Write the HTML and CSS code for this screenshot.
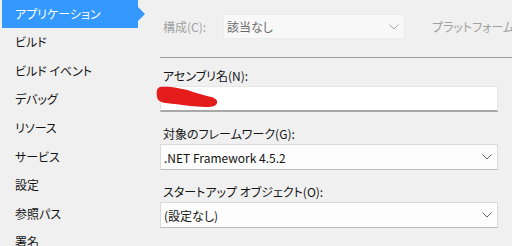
FILE: index.html
```html
<!DOCTYPE html>
<html lang="ja">
<head>
<meta charset="utf-8">
<link rel="stylesheet" href="styles.css">
</head>
<body>
<div class="page">
  <nav class="sidebar">
    <div class="item selected">アプリケーション</div>
    <div class="item">ビルド</div>
    <div class="item">ビルド イベント</div>
    <div class="item">デバッグ</div>
    <div class="item">リソース</div>
    <div class="item">サービス</div>
    <div class="item">設定</div>
    <div class="item">参照パス</div>
    <div class="item">署名</div>
  </nav>
  <main class="main">
    <div class="toprow">
      <span class="toplabel disabled">構成(C):</span>
      <div class="combo combo-top">
        <span class="value-dim">該当なし</span>
        <svg class="chev" width="10" height="6" viewBox="0 0 10 6"><polyline points="0.5,0.5 5,5 9.5,0.5" fill="none" stroke="#a8a8a8" stroke-width="1"/></svg>
      </div>
      <span class="platform disabled">プラットフォーム(</span>
    </div>
    <div class="sep"></div>
    <div class="form">
      <div class="field">
        <div class="label">アセンブリ名(N):</div>
        <div class="textbox">
          <svg class="scribble" width="66" height="24" viewBox="0 0 66 24"><path d="M5 1 C12 0 28 2 38 6 L52 10 C58 11 63 13 62 17 C61 21 55 21 50 21 L35 20 L20 18 C10 17 3 17 2 11 C1 5 2 2 5 1 Z" fill="#e41c1c"/></svg>
        </div>
      </div>
      <div class="field">
        <div class="label">対象のフレームワーク(G):</div>
        <div class="combo">
          <span class="value">.NET Framework 4.5.2</span>
          <svg class="chev" width="10" height="6" viewBox="0 0 10 6"><polyline points="0.5,0.5 5,5 9.5,0.5" fill="none" stroke="#606060" stroke-width="1"/></svg>
        </div>
      </div>
      <div class="field">
        <div class="label">スタートアップ オブジェクト(O):</div>
        <div class="combo">
          <span class="value">(設定なし)</span>
          <svg class="chev" width="10" height="6" viewBox="0 0 10 6"><polyline points="0.5,0.5 5,5 9.5,0.5" fill="none" stroke="#606060" stroke-width="1"/></svg>
        </div>
      </div>
    </div>
  </main>
</div>
</body>
</html>
```

FILE: styles.css
```css
* { box-sizing: border-box; }
html, body {
  margin: 0;
  padding: 0;
  width: 512px;
  height: 246px;
  overflow: hidden;
  background: #f0f0f0;
  font-family: "Noto Sans CJK JP", "Noto Sans", sans-serif;
  font-size: 12px;
  font-feature-settings: "palt";
  color: #141414;
}
.page {
  display: flex;
  height: 246px;
}
.sidebar {
  width: 136px;
  margin-left: 2px;
  flex: none;
  display: flex;
  flex-direction: column;
}
.item {
  height: 28.65px;
  line-height: 28px;
  padding-left: 13px;
  white-space: nowrap;
  position: relative;
  flex: none;
}
.item.selected {
  background: #3399ff;
  color: #ffffff;
  height: 28px;
}
.item.selected::after {
  content: "";
  position: absolute;
  right: -7px;
  top: 7px;
  border-top: 7px solid transparent;
  border-bottom: 7px solid transparent;
  border-left: 7px solid #3399ff;
}
.main {
  flex: 1;
  margin-left: 22px;
  display: flex;
  flex-direction: column;
  min-width: 0;
}
.toprow {
  display: flex;
  align-items: center;
  margin-top: 14px;
  height: 25px;
  white-space: nowrap;
}
.disabled { color: #a0a0a0; }
.toplabel {
  width: 63px;
  padding-left: 3px;
  flex: none;
}
.combo {
  display: flex;
  align-items: center;
  justify-content: space-between;
  height: 26px;
  width: 338px;
  background: #fdfdfd;
  border: 1px solid #dadada;
  border-bottom-color: #bdbdbd;
  padding: 0 5px 0 3px;
}
.combo-top {
  width: 182px;
  height: 25px;
  background: #f8f8f8;
  border-color: #ececec;
  flex: none;
}
.value-dim { color: #6a6a6a; }
.chev { flex: none; }
.platform {
  margin-left: 27px;
}
.sep {
  margin-top: 18px;
  height: 1px;
  background: #a0a0a0;
  margin-right: -2px;
}
.form {
  display: flex;
  flex-direction: column;
  gap: 12px;
  margin-top: 8px;
}
.label {
  height: 20px;
  line-height: 20px;
  padding-left: 3px;
  white-space: nowrap;
}
.textbox {
  position: relative;
  height: 26px;
  width: 338px;
  background: #ffffff;
  border: 1px solid #e6e6e6;
  border-bottom: 2px solid #a8a8a8;
}
.scribble {
  position: absolute;
  left: -6px;
  top: -1px;
}
```
